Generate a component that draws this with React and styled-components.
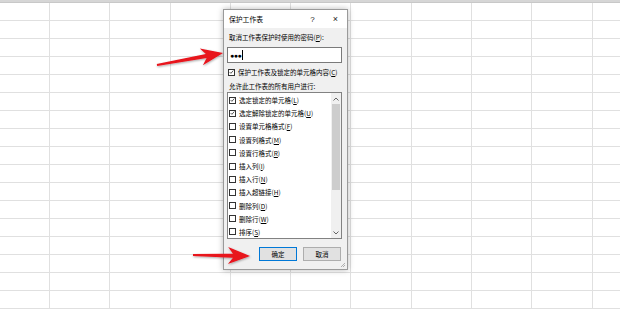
import React from 'react'
import styled, { createGlobalStyle } from 'styled-components'

const Global = createGlobalStyle`
  html, body { margin: 0; padding: 0; }
  body {
    width: 620px;
    height: 309px;
    overflow: hidden;
    background: #fff;
    font-family: "Noto Sans CJK SC", "Noto Sans", sans-serif;
  }
`

const Sheet = styled.div`
  position: relative;
  width: 620px;
  height: 309px;
  overflow: hidden;
  background: #fff;
`

const HeaderStrip = styled.div`
  height: 2px;
  background: #d6d6d6;
  border-bottom: 1px solid #c8c8c8;
`

const Grid = styled.div`
  display: grid;
  grid-template-columns: 50px repeat(10, 60.3px);
  grid-auto-rows: 18px;
`

const Cell = styled.div`
  border-right: 1px solid #e0e0e0;
  border-bottom: 1px solid #e0e0e0;
  box-sizing: border-box;
`

const Dialog = styled.div`
  position: absolute;
  left: 223px;
  top: 9px;
  width: 125px;
  height: 261px;
  box-sizing: border-box;
  background: #f0f0f0;
  border: 1px solid #9a9a9a;
  box-shadow: 0 0 6px rgba(0, 0, 0, 0.28);
  display: flex;
  flex-direction: column;
  font-size: 6.5px;
  color: #000;
`

const TitleBar = styled.div`
  height: 18px;
  background: #fff;
  display: flex;
  align-items: center;
  padding-left: 5px;
  font-size: 6.8px;
`

const TitleText = styled.span`
  flex: 1;
`

const TitleButton = styled.span`
  width: 23px;
  text-align: center;
  font-family: "Liberation Sans", sans-serif;
  font-size: ${p => p.$size || 8}px;
  color: #222;
`

const Body = styled.div`
  flex: 1;
  display: flex;
  flex-direction: column;
  padding: 0 5px 0 3px;
`

const Label = styled.div`
  height: 9px;
  line-height: 9px;
  margin: ${p => p.$margin || '0'};
  padding-left: 2px;
  white-space: nowrap;
`

const Input = styled.div`
  height: 16px;
  box-sizing: border-box;
  background: #fff;
  border: 1px solid #7a7a7a;
  display: flex;
  align-items: center;
  padding-left: 2px;
  margin-top: 5px;
  font-family: "Liberation Sans", sans-serif;
  font-size: 7px;
  letter-spacing: -0.5px;
`

const Caret = styled.span`
  width: 1px;
  height: 10px;
  background: #000;
  margin-left: 1px;
`

const CheckRow = styled.div`
  display: flex;
  align-items: center;
  gap: 3px;
  height: ${p => p.$h || 13}px;
  padding-left: 1px;
  white-space: nowrap;
`

const Box = styled.span`
  width: 7px;
  height: 7px;
  box-sizing: border-box;
  border: 1px solid #333;
  background: #fff;
  flex: none;
  display: flex;
  align-items: center;
  justify-content: center;
`

const ListBox = styled.div`
  height: 147px;
  box-sizing: border-box;
  border: 1px solid #828282;
  background: #fff;
  display: flex;
  margin-top: 1px;
`

const Items = styled.div`
  flex: 1;
  padding-top: 0.5px;
`

const Scrollbar = styled.div`
  width: 10px;
  background: #f0f0f0;
  display: flex;
  flex-direction: column;
  align-items: center;
`

const ScrollArrow = styled.div`
  height: 11px;
  display: flex;
  align-items: center;
  justify-content: center;
`

const Thumb = styled.div`
  width: 8px;
  height: 86px;
  background: #cdcdcd;
`

const Footer = styled.div`
  display: flex;
  justify-content: flex-end;
  gap: 6px;
  padding: 8px 1px 0 0;
`

const Button = styled.div`
  width: 38px;
  height: 14px;
  box-sizing: border-box;
  background: #e1e1e1;
  border: 1px solid ${p => (p.$primary ? '#0078d7' : '#adadad')};
  display: flex;
  align-items: center;
  justify-content: center;
  font-size: 6.5px;
`

const Grip = styled.svg`
  position: absolute;
  right: 1px;
  bottom: 1px;
`

const Overlay = styled.svg`
  position: absolute;
  left: 0;
  top: 0;
  pointer-events: none;
`

const Check = () => (
  <svg width="6" height="6" viewBox="0 0 6 6">
    <path d="M0.8 3.1 L2.3 4.6 L5.2 1.2" fill="none" stroke="#222" strokeWidth="0.9" />
  </svg>
)

const items = [
  ['选定锁定的单元格', 'L', true],
  ['选定解除锁定的单元格', 'U', true],
  ['设置单元格格式', 'F', false],
  ['设置列格式', 'M', false],
  ['设置行格式', 'R', false],
  ['插入列', 'I', false],
  ['插入行', 'N', false],
  ['插入超链接', 'H', false],
  ['删除列', 'D', false],
  ['删除行', 'W', false],
  ['排序', 'S', false],
]

// red callout arrow: thin tail, widening shaft, notched head
const arrow = (tail, tip, headLen, half) => {
  const dx = tip[0] - tail[0]
  const dy = tip[1] - tail[1]
  const len = Math.hypot(dx, dy)
  const ux = dx / len
  const uy = dy / len
  const nx = -uy
  const ny = ux
  const bx = tip[0] - ux * headLen
  const by = tip[1] - uy * headLen
  const nb = [bx + ux * 5, by + uy * 5]
  const p = (x, y) => `${x.toFixed(1)},${y.toFixed(1)}`
  return [
    p(tail[0] + nx * 1, tail[1] + ny * 1),
    p(nb[0] + nx * 2, nb[1] + ny * 2),
    p(bx + nx * half, by + ny * half),
    p(tip[0], tip[1]),
    p(bx - nx * half, by - ny * half),
    p(nb[0] - nx * 2, nb[1] - ny * 2),
    p(tail[0] - nx * 1, tail[1] - ny * 1),
  ].join(' ')
}

export default function App() {
  const cells = Array.from({ length: 17 * 11 })
  return (
    <Sheet>
      <Global />
      <HeaderStrip />
      <Grid>
        {cells.map((_, i) => (
          <Cell key={i} />
        ))}
      </Grid>

      <Dialog>
        <TitleBar>
          <TitleText>保护工作表</TitleText>
          <TitleButton>?</TitleButton>
          <TitleButton $size={9}>×</TitleButton>
        </TitleBar>
        <Body>
          <Label $margin="5px 0 0 0">取消工作表保护时使用的密码(<u>P</u>):</Label>
          <Input>
            ●●●<Caret />
          </Input>
          <CheckRow $h={18}>
            <Box>
              <Check />
            </Box>
            <span>保护工作表及锁定的单元格内容(<u>C</u>)</span>
          </CheckRow>
          <Label $margin="1px 0 0 0">允许此工作表的所有用户进行:</Label>
          <ListBox>
            <Items>
              {items.map(([text, key, on]) => (
                <CheckRow key={text} $h={13.2}>
                  <Box>{on && <Check />}</Box>
                  <span>
                    {text}(<u>{key}</u>)
                  </span>
                </CheckRow>
              ))}
            </Items>
            <Scrollbar>
              <ScrollArrow>
                <svg width="6" height="4" viewBox="0 0 6 4">
                  <path d="M0.5 3.5 L3 1 L5.5 3.5" fill="none" stroke="#555" strokeWidth="0.9" />
                </svg>
              </ScrollArrow>
              <Thumb />
              <div style={{ flex: 1 }} />
              <ScrollArrow>
                <svg width="6" height="4" viewBox="0 0 6 4">
                  <path d="M0.5 0.5 L3 3 L5.5 0.5" fill="none" stroke="#555" strokeWidth="0.9" />
                </svg>
              </ScrollArrow>
            </Scrollbar>
          </ListBox>
          <Footer>
            <Button $primary>确定</Button>
            <Button>取消</Button>
          </Footer>
        </Body>
        <Grip width="6" height="6" viewBox="0 0 6 6">
          <path d="M5 1 L1 5 M5 3 L3 5" stroke="#a0a0a0" strokeWidth="0.8" />
        </Grip>
      </Dialog>

      <Overlay width="620" height="309" viewBox="0 0 620 309">
        <defs>
          <filter id="sh" x="-20%" y="-50%" width="140%" height="200%">
            <feDropShadow dx="0.5" dy="1" stdDeviation="0.8" floodColor="#000" floodOpacity="0.35" />
          </filter>
        </defs>
        <polygon points={arrow([157, 65], [223, 53], 22, 8.5)} fill="#e8121b" filter="url(#sh)" />
        <polygon points={arrow([193, 255], [250, 256], 22, 8.5)} fill="#e8121b" filter="url(#sh)" />
      </Overlay>
    </Sheet>
  )
}
